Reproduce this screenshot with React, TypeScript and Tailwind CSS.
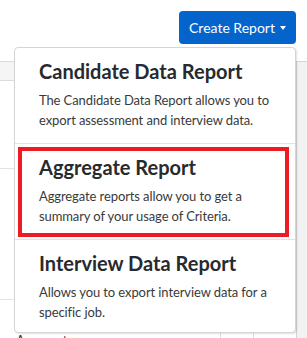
import { useState } from "react";

type ReportOption = {
  id: string;
  title: string;
  description: string;
};

const reportOptions: ReportOption[] = [
  {
    id: "candidate",
    title: "Candidate Data Report",
    description: "The Candidate Data Report allows you to export assessment and interview data.",
  },
  {
    id: "aggregate",
    title: "Aggregate Report",
    description: "Aggregate reports allow you to get a summary of your usage of Criteria.",
  },
  {
    id: "interview",
    title: "Interview Data Report",
    description: "Allows you to export interview data for a specific job.",
  },
];

function ReportsTable() {
  // only the edges of this table peek out from behind the open menu
  return (
    <div className="mt-[17px] grid grid-cols-[220px_33px_43px_11px] grid-rows-[20px_88px_131px_38px] text-[13px] text-[#333]">
      <div className="col-span-3 border-y border-[#dcdcdc] bg-[#f5f5f5]" />
      <div className="row-span-4 border-t border-l border-[#d6d6d6] bg-[#f2f2f2]" />
      <div className="col-span-3 border-b border-[#e2e2e2]" />
      <div className="col-span-3 border-b border-[#e2e2e2]" />
      <div className="pl-4 pt-[30px] leading-5">Aggregate</div>
      <div className="border-l border-[#dcdcdc]" />
      <div className="border-l border-[#dcdcdc]" />
    </div>
  );
}

function ReportMenu({ highlighted }: { highlighted: string }) {
  return (
    <div className="absolute left-[14px] top-[47px] w-[282px] rounded-[4px] border border-[#d5d5d5] bg-white shadow-[1px_1px_2px_rgba(0,0,0,0.12)]">
      {reportOptions.map((option, i) => (
        <div
          key={option.id}
          className={`relative pl-6 pr-3 pt-[11px] ${i === reportOptions.length - 1 ? "pb-[10px]" : "border-b border-[#e3e3e3] pb-[13px]"}`}
        >
          <div className="text-[20px] font-bold leading-[25px] text-[#272a2e]">{option.title}</div>
          <p className="mt-[6px] text-[13px] leading-5 tracking-[-0.1px] text-[#3a3a3a]">{option.description}</p>
          {option.id === highlighted && (
            <div className="pointer-events-none absolute top-[3px] bottom-[2px] left-[3px] right-[6px] border-4 border-[#ed1c24]" />
          )}
        </div>
      ))}
    </div>
  );
}

export default function App() {
  const [open] = useState(true);

  return (
    <div className="relative h-[338px] w-[307px] overflow-hidden bg-white font-['Lato','Liberation_Sans',sans-serif]">
      <div className="flex justify-end pt-[11px] pr-[11px]">
        <button className="flex h-[33px] w-[117px] items-center justify-center gap-[5px] rounded-[4px] bg-[#0564cc] text-[14px] text-white">
          Create Report
          <span className="mt-[1px] h-0 w-0 border-x-[3px] border-t-[4px] border-x-transparent border-t-white" />
        </button>
      </div>
      <ReportsTable />
      {open && <ReportMenu highlighted="aggregate" />}
    </div>
  );
}
